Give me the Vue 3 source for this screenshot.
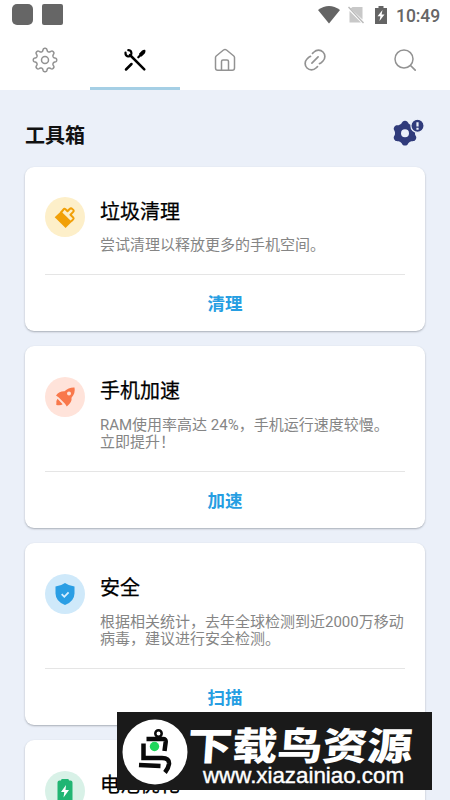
<script setup>
const cards = [
  { icon: 'brush', tint: 'amber', title: '垃圾清理', lines: ['尝试清理以释放更多的手机空间。'], action: '清理' },
  { icon: 'rocket', tint: 'coral', title: '手机加速', lines: ['RAM使用率高达 24%，手机运行速度较慢。', '立即提升！'], action: '加速' },
  { icon: 'shield', tint: 'sky', title: '安全', lines: ['根据相关统计，去年全球检测到近2000万移动', '病毒，建议进行安全检测。'], action: '扫描' },
  { icon: 'battery', tint: 'mint', title: '电池优化', lines: [], action: '' },
]

// Closed outline of a gear with softly rounded teeth, centred on the origin.
function gear(teeth, inner, outer, sharpness, turn) {
  const points = []
  for (let i = 0; i < 180; i++) {
    const a = (i / 180) * Math.PI * 2
    const wave = Math.tanh(sharpness * Math.cos(teeth * (a - turn))) / Math.tanh(sharpness)
    const r = (inner + outer) / 2 + ((outer - inner) / 2) * wave
    points.push(`${(r * Math.cos(a)).toFixed(2)} ${(r * Math.sin(a)).toFixed(2)}`)
  }
  return `M${points.join('L')}Z`
}
const outlineGear = gear(8, 8.8, 11.7, 1.6, 0)
const solidGear = gear(6, 10, 12.4, 1.2, Math.PI / 6)
</script>

<template>
  <div class="screen">
    <header class="status">
      <div class="notices"><i class="notice round"></i><i class="notice"></i></div>
      <div class="signals">
        <svg class="wifi" width="22" height="18" viewBox="0 0 22 18"><path d="M0 4Q11-4 22 4L11 17.500Z" /></svg>
        <svg class="sim" width="16" height="18" viewBox="0 0 16 18">
          <path class="sim-body" d="M4.500 1H14.500V13.500L2.500 2.500ZM1.500 5L13 16.500H1.500Z" />
          <path class="sim-slash" d="M.5 1L15.500 17" />
        </svg>
        <svg class="cell" width="12" height="18" viewBox="0 0 12 18">
          <path d="M3.500 0H8.500V2H12V18H0V2H3.500Z" /><path class="white" d="M7.500 4L2.500 10.200H5.400L4.500 15L9.500 8.500H6.600Z" />
        </svg>
        <span class="clock">10:49</span>
      </div>
    </header>

    <nav class="tabs">
      <a class="tab"><svg width="26" height="26" viewBox="-13 -13 26 26"><path :d="outlineGear" /><circle r="3.500" /></svg></a>
      <a class="tab active">
        <svg width="26" height="26" viewBox="0 0 26 26">
          <path class="thick" d="M8 8L22.300 22.300M4 22.500L9.500 17" />
          <path class="thin" d="M3.500 5.500C3.200 9.500 7 10.200 8.600 8.700C10.200 7 9.600 3.200 6.300 3.200" />
          <path class="thin" d="M16.300 10.300L19 7.600" />
          <path class="solid" d="M17.800 7L20.200 4.400Q21.700 3.400 22.700 3.600Q23 4.800 22 6.200L19.400 8.600Z" />
        </svg>
      </a>
      <a class="tab"><svg width="26" height="26" viewBox="0 0 26 26"><path d="M3.500 10.500Q3.500 9.600 4.200 9L11.500 3Q13 1.900 14.500 3L21.800 9Q22.500 9.600 22.500 10.500V21Q22.500 23.300 20.200 23.300H5.800Q3.500 23.300 3.500 21ZM9.500 23V14.500Q9.500 13 11 13H15Q16.500 13 16.500 14.500V23" /></svg></a>
      <a class="tab"><svg width="26" height="26" viewBox="0 0 26 26"><path class="link" d="M10.500 6.400L12 5A6.200 6.200 0 0 1 21 14L19.300 15.700Q18.500 16.400 17.500 16.600M15.500 19.600L14 21A6.200 6.200 0 0 1 5 12L6.700 10.300Q7.500 9.600 8.500 9.400M9.900 16.100L16.100 9.900" /></svg></a>
      <a class="tab"><svg width="26" height="26" viewBox="0 0 26 26"><circle cx="12" cy="12" r="9" /><path class="link" d="M18.500 18.500L23.200 23.100" /></svg></a>
    </nav>

    <main class="content">
      <div class="heading">
        <h1>工具箱</h1>
        <svg class="manage" width="34" height="28" viewBox="0 0 34 28">
          <path :d="solidGear" transform="translate(14 15.200)" /><circle class="hole" cx="14" cy="15.200" r="4" />
          <circle class="ring" cx="26.500" cy="7.800" r="6.600" /><path class="mark" d="M26.500 4.200V8.400M26.500 9.800V11.700" />
        </svg>
      </div>

      <section v-for="card in cards" :key="card.title" class="card">
        <div class="info">
          <div class="badge" :class="card.tint">
            <svg v-if="card.icon === 'brush'" width="24" height="24" viewBox="0 0 24 24">
              <path d="M1.700 12.200L8 6.200L18.800 16.800L12.600 23Z" />
              <path class="outline" d="M8 7.500L10.500 4.500Q11.400 3.300 12.500 4.300L14.500 6.300L16.700 4Q18 2.800 19.300 4Q21.600 5.400 20.200 6.900L17.400 9.800L20.200 12.400Q21.100 13.300 20.200 14.400L18 16.500" />
            </svg>
            <svg v-else-if="card.icon === 'rocket'" width="24" height="24" viewBox="0 0 24 24">
              <path fill-rule="evenodd" d="M21.500 2.500Q22.700 8 18.500 12.800Q19.400 17 13.800 21.500L12 18.700L5.800 12.500L3 10.500Q6.500 6 11.500 6.300Q15.500 2.200 21.500 2.500ZM18 8.500A2 2 0 1 0 14 8.500A2 2 0 1 0 18 8.500Z" />
              <path d="M4.500 13.800L9.700 19.200Q7.500 21 3.300 20Q2.500 16 4.500 13.800Z" />
            </svg>
            <svg v-else-if="card.icon === 'shield'" width="24" height="24" viewBox="0 0 24 24">
              <path d="M12 1Q16 4 21.500 4.400V11.500Q21.300 19.500 12 23Q2.700 19.500 2.500 11.500V4.400Q8 4 12 1Z" />
              <path class="check" d="M8.700 12.200L11.300 14.800L15.600 10.300" />
            </svg>
            <svg v-else width="24" height="24" viewBox="0 0 24 24">
              <path d="M9 0H15Q16 0 16 1.500H17.500Q19.500 1.500 19.500 3.500V24H4.500V3.500Q4.500 1.500 6.500 1.500H8Q8 0 9 0Z" />
              <path class="white" d="M13 6L8 13H11.300L10.500 18.500L16 11H12.500Z" />
            </svg>
          </div>
          <div class="copy">
            <h2>{{ card.title }}</h2>
            <p v-for="line in card.lines" :key="line">{{ line }}</p>
          </div>
        </div>
        <button v-if="card.action" class="action">{{ card.action }}</button>
      </section>
    </main>

    <aside class="banner">
      <svg width="315" height="78" viewBox="0 0 315 78">
        <circle class="disc" cx="38" cy="40" r="32.500" />
        <g class="bird">
          <circle class="crest" cx="41.500" cy="21.500" r="3.200" />
          <path d="M29.500 27H46Q49 27 48.700 30L47.500 39M26.500 31.500V46H45Q52.500 46 52 52Q51.500 56 48 60.500" /><path d="M22 53L43.500 54" />
        </g>
        <circle class="dot" cx="37.500" cy="34.500" r="4.700" />
        <text class="brand" transform="translate(69.500 47.500) skewX(-4) scale(1 .89)" textLength="225" lengthAdjust="spacingAndGlyphs">下载鸟资源</text>
        <text class="site" x="86" y="70.500" textLength="201" lengthAdjust="spacingAndGlyphs">www.xiazainiao.com</text>
      </svg>
    </aside>
  </div>
</template>

<style>
body { margin: 0; overflow: hidden; }
</style>

<style scoped>
.screen { position: relative; width: 450px; height: 800px; overflow: hidden; background: #ebf0f9; font-family: Roboto, "Noto Sans CJK SC", sans-serif; }
.status { display: flex; justify-content: space-between; height: 30px; background: #fff; }
.notices { display: flex; gap: 9px; padding: 4px 0 0 12px; }
.notice { width: 21px; height: 21px; border-radius: 2px; background: #666; }
.notice.round { border-radius: 5px; }
.signals { display: flex; align-items: flex-start; padding: 6px 10px 0 0; fill: #646464; }
.wifi { margin-right: 8px; }
.sim { margin-right: 11px; }
.sim-body { fill: #c8c8c8; }
.sim-slash { stroke: #bbb; stroke-width: 1.500; }
.cell { margin-right: 9px; }
.white { fill: #fff; }
.clock { font: 500 17.500px/20px Roboto, sans-serif; color: #666; letter-spacing: -.1px; }
.tabs { display: grid; grid-template-columns: repeat(5, 90px); height: 60px; background: #fff; }
.tab { display: flex; align-items: center; justify-content: center; box-sizing: border-box; border-bottom: 3px solid transparent; padding-top: 3px; }
.tab.active { border-color: #a5cfe5; }
.tab svg { fill: none; stroke: #929292; stroke-width: 1.500; stroke-linejoin: round; }
.tab .link { stroke-width: 1.700; stroke-linecap: round; }
.tab.active svg { stroke: #000; stroke-linecap: round; }
.tab .thick { stroke-width: 2.500; }
.tab .thin { stroke-width: 2.200; }
.tab .solid { fill: #000; }
.content { display: flex; flex-direction: column; gap: 15px; padding: 0 25px; }
.heading { display: flex; align-items: center; justify-content: space-between; height: 40.500px; padding-top: 21px; }
h1, h2, p { margin: 0; }
h1 { font-size: 20px; line-height: 28px; font-weight: 700; color: #111; padding-top: 9px; }
.manage { fill: #303b7b; padding-top: 2px; box-sizing: content-box; }
.manage .hole { fill: #ebf0f9; }
.manage .ring { stroke: #ebf0f9; stroke-width: 1.200; }
.manage .mark { fill: none; stroke: #ebf0f9; stroke-width: 2.200; }
.card { box-sizing: border-box; flex: none; padding: 0 20px; border-radius: 9px; background: #fff; box-shadow: 0 1px 2px rgba(60, 65, 75, .38); }
.info { display: flex; gap: 15px; padding: 30.500px 0 19px; border-bottom: 1px solid #e5e5e5; }
.badge { display: flex; flex: none; align-items: center; justify-content: center; width: 40px; height: 40px; border-radius: 50%; }
.amber { background: #fdefc9; color: #f1a008; }
.coral { background: #ffe3da; color: #f9784b; }
.sky { background: #cfe9fa; color: #2a9ee4; }
.mint { background: #d8f1e7; color: #20b573; }
.badge svg { fill: currentColor; }
.badge .outline { fill: none; stroke: currentColor; stroke-width: 2; stroke-linejoin: round; }
.badge .check { fill: none; stroke: #d8efff; stroke-width: 1.800; }
.badge .white { fill: #fff; }
.copy { min-width: 0; padding-top: .5px; }
h2 { height: 28px; margin-bottom: 11.500px; font-size: 20px; line-height: 28px; font-weight: 400; color: #000; -webkit-text-stroke: .25px #000; }
p { height: 17.500px; font-size: 15px; line-height: 17.500px; color: #858585; white-space: nowrap; }
.action { display: block; width: 100%; height: 56.500px; padding: 2px 0 0; border: 0; background: transparent; color: #269ee2; font: 700 17.500px/54.500px Roboto, "Noto Sans CJK SC", sans-serif; }
.banner { position: absolute; left: 117px; top: 712px; width: 315px; height: 78px; background: #1a1a1a; }
.banner svg { display: block; }
.disc { fill: #fff; }
.bird { fill: none; stroke: #090909; stroke-width: 4.500; }
.bird .crest { stroke-width: 2.500; }
.dot { fill: #20d65b; }
.brand { fill: #fff; font: 900 43px "Noto Sans CJK SC", sans-serif; }
.site { fill: #fff; stroke: #fff; stroke-width: .4px; font: 22px "Liberation Sans", sans-serif; }
</style>
